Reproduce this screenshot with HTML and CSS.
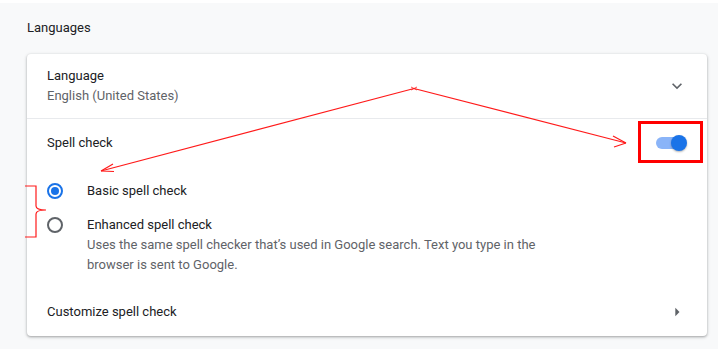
FILE: index.html
```html
<!DOCTYPE html>
<html lang="en">
<head>
<meta charset="utf-8">
<title>Languages</title>
<link rel="stylesheet" href="styles.css">
</head>
<body>
<div class="page">
  <h2 class="section-title">Languages</h2>
  <div class="card">
    <div class="row row-tall">
      <div class="row-text">
        <div class="label">Language</div>
        <div class="secondary">English (United States)</div>
      </div>
      <svg class="icon" viewBox="0 0 24 24" width="20" height="20"><path d="M7.41 8.59L12 13.17l4.59-4.58L18 10l-6 6-6-6 1.41-1.41z"/></svg>
    </div>
    <div class="row row-sep">
      <div class="label">Spell check</div>
      <div class="toggle"><span class="toggle-bar"></span><span class="toggle-knob"></span></div>
    </div>
    <div class="radio-group">
      <div class="radio-row">
        <span class="radio checked"></span>
        <div class="radio-text"><div class="label">Basic spell check</div></div>
      </div>
      <div class="radio-row radio-row-desc">
        <span class="radio"></span>
        <div class="radio-text">
          <div class="label">Enhanced spell check</div>
          <div class="secondary desc">Uses the same spell checker that’s used in Google search. Text you type in the browser is sent to Google.</div>
        </div>
      </div>
    </div>
    <div class="row">
      <div class="label">Customize spell check</div>
      <svg class="icon" viewBox="0 0 24 24" width="20" height="20"><path d="M10 17l5-5-5-5v10z"/></svg>
    </div>
  </div>
  <svg class="annotations" width="718" height="349" viewBox="0 0 718 349">
    <g fill="none" stroke="#ff1a1a" stroke-width="1.2">
      <path d="M414 88.5 L101 171"/>
      <path d="M101 171 L113 164 M101 171 L114 171.5"/>
      <path d="M414 88.5 L626 143"/>
      <path d="M626 143 L613 136 M626 143 L614 147"/>
      <path d="M411 87 L417 90 M417 87 L411 90" stroke-width="0.8"/>
      <path d="M25 186 H36 V206 Q36 210 46 210 Q36 210 36 214 V237 H25"/>
    </g>
    <rect x="639.5" y="122.5" width="62" height="39" fill="none" stroke="#ff0000" stroke-width="3"/>
  </svg>
</div>
</body>
</html>
```

FILE: styles.css
```css
* { box-sizing: border-box; }
html, body { margin: 0; padding: 0; }
body {
  font-family: Roboto, "Liberation Sans", sans-serif;
  font-size: 13px;
  line-height: 20px;
  color: #202124;
  background: #f8f9fa;
}
.page {
  position: relative;
  width: 718px;
  height: 349px;
  border-top: 3px solid #ffffff;
  padding: 0 11px 0 27px;
  overflow: hidden;
}
.section-title {
  margin: 0;
  padding-top: 15px;
  font-size: 13px;
  font-weight: 400;
  line-height: 20px;
  color: #202124;
}
.card {
  margin-top: 16px;
  background: #fff;
  border-radius: 4px;
  box-shadow: 0 1px 2px 0 rgba(60,64,67,.3), 0 1px 3px 1px rgba(60,64,67,.15);
}
.row {
  display: flex;
  align-items: center;
  justify-content: space-between;
  min-height: 48px;
  padding: 0 20px;
}
.row-tall { min-height: 64px; }
.row-sep { border-top: 1px solid #e8eaed; }
.secondary { color: #5f6368; }
.icon { fill: #5f6368; display: block; }
.toggle {
  position: relative;
  width: 31px;
  height: 16px;
}
.toggle-bar {
  position: absolute;
  left: 0;
  top: 2px;
  width: 28px;
  height: 12px;
  border-radius: 6px;
  background: #8ab4f8;
}
.toggle-knob {
  position: absolute;
  left: 15px;
  top: 0;
  width: 16px;
  height: 16px;
  border-radius: 50%;
  background: #1a73e8;
  box-shadow: 0 1px 2px rgba(0,0,0,.3);
}
.radio-group { padding: 0 20px; }
.radio-row {
  display: flex;
  align-items: center;
  gap: 24px;
  padding: 15px 0 14px;
}
.radio-row-desc {
  align-items: flex-start;
  padding: 0 0 13px;
}
.radio-row-desc .radio { margin-top: 2px; }
.radio {
  flex: none;
  width: 16px;
  height: 16px;
  border: 2px solid #5f6368;
  border-radius: 50%;
  position: relative;
}
.radio.checked { border-color: #1a73e8; }
.radio.checked::after {
  content: "";
  position: absolute;
  left: 2px;
  top: 2px;
  width: 8px;
  height: 8px;
  border-radius: 50%;
  background: #1a73e8;
}
.desc { max-width: 460px; }
.annotations {
  position: absolute;
  left: 0;
  top: -3px;
  pointer-events: none;
}
```
